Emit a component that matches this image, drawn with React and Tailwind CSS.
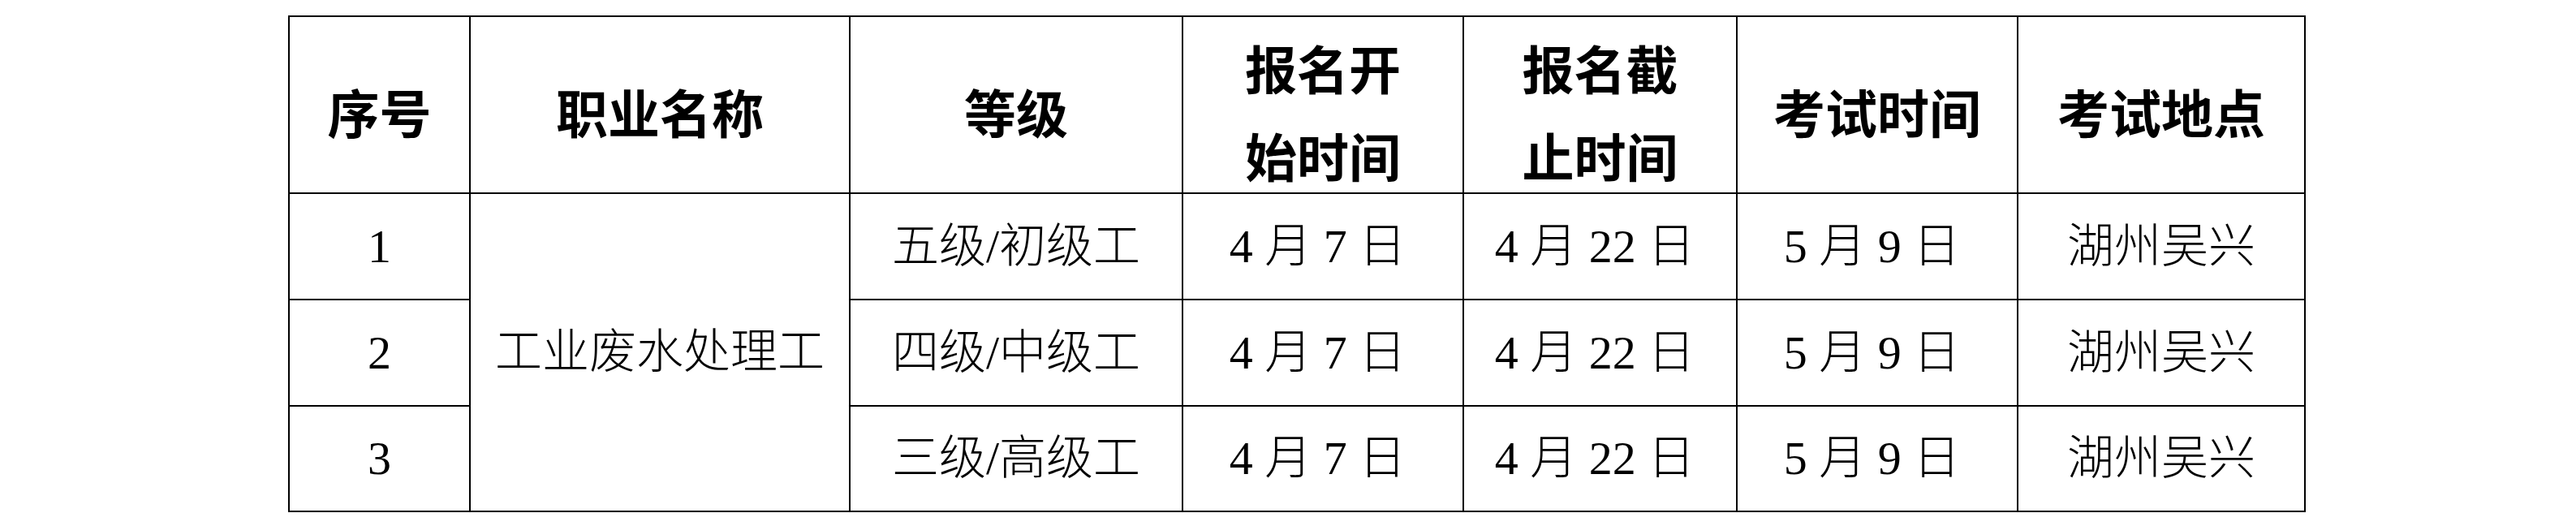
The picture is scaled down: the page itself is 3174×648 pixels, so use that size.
export default function App() {
  const rows = [
    { n: "1", level: "五级/初级工" },
    { n: "2", level: "四级/中级工" },
    { n: "3", level: "三级/高级工" },
  ];
  const th =
    "border-r-2 border-b-2 border-black p-0 align-middle text-center font-['Noto_Sans_CJK_SC',sans-serif] font-bold text-[64px] leading-[108px] text-black";
  const td =
    "border-r-2 border-b-2 border-black p-0 align-middle text-center font-['Liberation_Serif','Noto_Sans_CJK_SC',serif] font-light text-[58px] leading-[70px] text-black whitespace-nowrap";
  const tdDate = td + " pr-[13px]";
  const H = ({ children }) => (
    <th className={th}>
      <div className="mt-[7px] -mb-[7px]">{children}</div>
    </th>
  );
  return (
    <div className="w-[3174px] h-[648px] bg-white pt-[19px] pl-[355px]">
      <table className="table-fixed border-separate border-spacing-0 border-l-2 border-t-2 border-black w-[2486px]">
        <colgroup>
          <col className="w-[223px]" />
          <col className="w-[468px]" />
          <col className="w-[410px]" />
          <col className="w-[346px]" />
          <col className="w-[337px]" />
          <col className="w-[346px]" />
          <col className="w-[354px]" />
        </colgroup>
        <thead>
          <tr className="h-[216px]">
            <H>序号</H>
            <H>职业名称</H>
            <H>等级</H>
            <H>
              报名开
              <br />
              始时间
            </H>
            <H>
              报名截
              <br />
              止时间
            </H>
            <H>考试时间</H>
            <H>考试地点</H>
          </tr>
        </thead>
        <tbody>
          {rows.map((r, i) => (
            <tr key={r.n} className={i === 2 ? "h-[130px]" : "h-[131px]"}>
              <td className={td}>{r.n}</td>
              {i === 0 && (
                <td className={td} rowSpan={3}>
                  工业废水处理工
                </td>
              )}
              <td className={td}>{r.level}</td>
              <td className={tdDate}>4 月 7 日</td>
              <td className={tdDate}>4 月 22 日</td>
              <td className={tdDate}>5 月 9 日</td>
              <td className={td}>湖州吴兴</td>
            </tr>
          ))}
        </tbody>
      </table>
    </div>
  );
}
